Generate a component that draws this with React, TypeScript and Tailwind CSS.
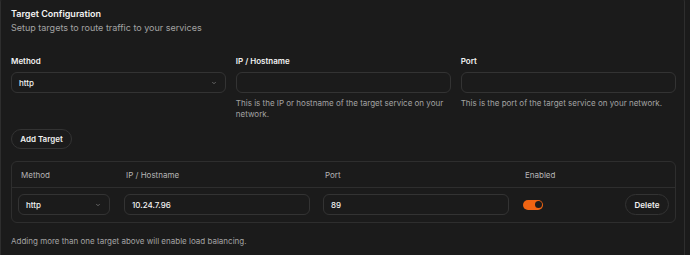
import { ChevronDown } from 'lucide-react';

function Field({ label, help, children }: { label: string; help: string; children: React.ReactNode }) {
  return (
    <div className="flex flex-col">
      <label className="text-[8px] font-semibold leading-[12px] text-[#f2f2f2]">{label}</label>
      <div className="mt-[5px]">{children}</div>
      <p className="mt-[4.5px] text-[8px] leading-[11px] text-[#a3a3a3]">{help}</p>
    </div>
  );
}

function SelectBox({ value, className = '' }: { value: string; className?: string }) {
  return (
    <div
      className={`flex h-[21px] items-center justify-between rounded-[6px] border border-[#333333] px-[7px] text-[8px] font-medium text-[#f2f2f2] ${className}`}
    >
      <span>{value}</span>
      <ChevronDown className="mr-[1px] h-[6px] w-[6px] text-[#8f8f8f]" strokeWidth={2.5} />
    </div>
  );
}

function TextBox({ value = '', className = '' }: { value?: string; className?: string }) {
  return (
    <div
      className={`flex h-[21px] items-center rounded-[6px] border border-[#333333] px-[7px] text-[8px] font-medium text-[#f2f2f2] ${className}`}
    >
      {value}
    </div>
  );
}

export default function App() {
  return (
    <div className="h-[255px] w-[690px] overflow-hidden bg-[#1b1b1b] font-['Inter',sans-serif]">
      <div className="-mt-[6px] w-[685px] rounded-lg border border-[#2e2e2e] pb-8 pl-[10px] pr-[8px] pt-[12px]">
        <h2 className="text-[9px] font-semibold leading-[14px] text-[#f2f2f2]">Target Configuration</h2>
        <p className="text-[9px] leading-[14px] text-[#a3a3a3]">Setup targets to route traffic to your services</p>

        <div className="mt-[20px] grid grid-cols-3 gap-x-[9.5px]">
          <Field label="Method" help="">
            <SelectBox value="http" />
          </Field>
          <Field label="IP / Hostname" help="This is the IP or hostname of the target service on your network.">
            <TextBox />
          </Field>
          <Field label="Port" help="This is the port of the target service on your network.">
            <TextBox />
          </Field>
        </div>

        <button
          type="button"
          className="mt-[9.5px] flex h-[20px] w-[61px] items-center justify-center rounded-full border border-[#333333] text-[8px] font-semibold text-[#f2f2f2]"
        >
          Add Target
        </button>

        <div className="mt-[12px] rounded-[6px] border border-[#2e2e2e]">
          <div className="flex h-[26px] items-center border-b border-[#2e2e2e] pl-[9px] text-[8px] text-[#b5b5b5]">
            <span className="w-[105px]">Method</span>
            <span className="w-[199px]">IP / Hostname</span>
            <span className="w-[200px]">Port</span>
            <span>Enabled</span>
          </div>
          <div className="flex items-center px-[6px] pb-[7px] pt-[6px]">
            <SelectBox value="http" className="w-[92px]" />
            <TextBox value="10.24.7.96" className="ml-[14px] w-[186px]" />
            <TextBox value="89" className="ml-[13px] w-[186px]" />
            <div className="ml-[14px] flex h-[10px] w-[20px] items-center justify-end rounded-full bg-[#ef6413] pr-[1.5px]">
              <div className="h-[7px] w-[7px] rounded-full bg-[#1c1c1c]" />
            </div>
            <button
              type="button"
              className="ml-auto flex h-[21px] w-[44px] items-center justify-center rounded-full border border-[#333333] text-[8px] font-semibold text-[#f2f2f2]"
            >
              Delete
            </button>
          </div>
        </div>

        <p className="mt-[12px] text-[8px] leading-[12px] text-[#a3a3a3]">
          Adding more than one target above will enable load balancing.
        </p>
      </div>
    </div>
  );
}
